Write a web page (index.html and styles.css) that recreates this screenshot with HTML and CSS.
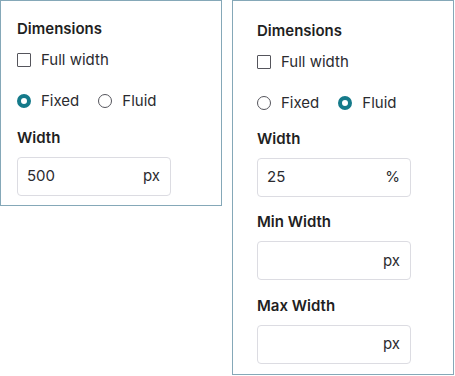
FILE: index.html
```html
<!DOCTYPE html>
<html>
<head>
<meta charset="utf-8">
<link rel="stylesheet" href="styles.css">
</head>
<body>
<div class="stage">
  <div class="panel panel-a">
    <div class="title">Dimensions</div>
    <label class="check-row"><span class="checkbox"></span><span>Full width</span></label>
    <div class="radio-row">
      <label class="radio-item"><span class="radio checked"></span><span>Fixed</span></label>
      <label class="radio-item"><span class="radio"></span><span>Fluid</span></label>
    </div>
    <div class="field-label">Width</div>
    <div class="input"><span class="value">500</span><span class="unit">px</span></div>
  </div>
  <div class="panel panel-b">
    <div class="title">Dimensions</div>
    <label class="check-row"><span class="checkbox"></span><span>Full width</span></label>
    <div class="radio-row">
      <label class="radio-item"><span class="radio"></span><span>Fixed</span></label>
      <label class="radio-item"><span class="radio checked"></span><span>Fluid</span></label>
    </div>
    <div class="field-label">Width</div>
    <div class="input"><span class="value">25</span><span class="unit">%</span></div>
    <div class="field-label">Min Width</div>
    <div class="input"><span class="value"></span><span class="unit">px</span></div>
    <div class="field-label">Max Width</div>
    <div class="input"><span class="value"></span><span class="unit">px</span></div>
  </div>
</div>
</body>
</html>
```
FILE: styles.css
```css
html, body {
  margin: 0;
  padding: 0;
  background: #ffffff;
}
body {
  font-family: Inter, "Noto Sans", "Liberation Sans", sans-serif;
  font-size: 15px;
  line-height: 20px;
  color: #2b2b2f;
}
.stage {
  display: flex;
  align-items: flex-start;
  gap: 10px;
}
.panel {
  box-sizing: border-box;
  width: 222px;
  border: 1px solid #85a8b8;
  display: flex;
  flex-direction: column;
  align-items: flex-start;
}
.panel-a {
  height: 206px;
  padding: 18px 0 0 16px;
}
.panel-b {
  height: 375px;
  padding: 20px 0 0 24px;
}
.title, .field-label {
  font-weight: 600;
  color: #1f1f23;
}
.check-row {
  margin-top: 11px;
  display: flex;
  align-items: center;
  gap: 10px;
}
.checkbox {
  box-sizing: border-box;
  width: 14px;
  height: 14px;
  border: 1px solid #55555c;
  border-radius: 1px;
  background: #fff;
}
.radio-row {
  margin-top: 21px;
  display: flex;
  gap: 19px;
}
.radio-item {
  display: flex;
  align-items: center;
  gap: 10px;
}
.radio {
  box-sizing: border-box;
  width: 14px;
  height: 14px;
  border: 1px solid #55555c;
  border-radius: 50%;
  background: #fff;
}
.radio.checked {
  border: 4px solid #157a8a;
}
.field-label {
  margin-top: 16.5px;
}
.panel-b .field-label {
  margin-top: 15.5px;
}
.input {
  box-sizing: border-box;
  margin-top: 9px;
  width: 154px;
  height: 39px;
  border: 1px solid #dcdce2;
  border-radius: 4px;
  padding: 0 10px 0 9px;
  display: flex;
  align-items: center;
  justify-content: space-between;
  color: #2b2b2f;
}
```
